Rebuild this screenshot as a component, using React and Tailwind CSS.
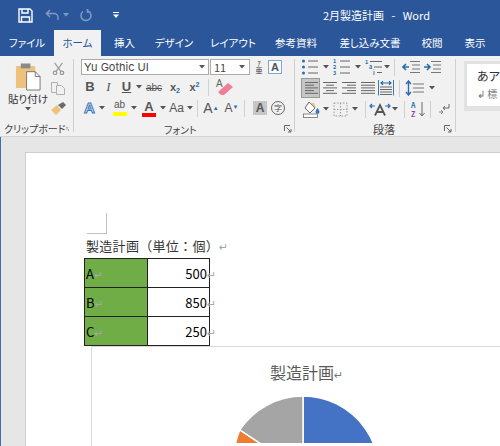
const Chev = ({ className = "w-[10px]" }) => (
  <span className={`${className} flex justify-center shrink-0`}>
    <svg width="6" height="4" viewBox="0 0 6 4"><path d="M0 0h6L3 3.500z" fill="#555" /></svg>
  </span>
);

const Launcher = () => (
  <svg width="8" height="8" viewBox="0 0 8 8" fill="none" stroke="#666">
    <path d="M.5 6V.5H6" />
    <path d="M2.500 2.500L7 7M7 4v3H4" />
  </svg>
);

const Sep = () => <div className="h-[17px] w-px bg-[#d0d0d0] shrink-0" />;
const GroupSep = () => <div className="h-[73px] w-px mt-[3px] bg-[#d0d0d0] shrink-0" />;

// lines of an alignment button, x offsets give the alignment
const Lines = ({ rows }) => (
  <svg width="16" height="14" viewBox="0 0 16 14" stroke="#666">
    {rows.map((r, i) => (
      <path key={i} d={`M${r[0]} ${1.500 + i * 2.700}H${r[1]}`} />
    ))}
  </svg>
);

const ListIcon = ({ marks }) => (
  <svg width="18" height="16" viewBox="0 0 18 16">
    {[2, 8, 14].map((y, i) => (
      <g key={y}>
        {marks === "dot" ? (
          <circle cx="2.500" cy={y} r="1.500" fill="#2b6cb0" />
        ) : (
          <text x="0" y={y + 2} fontSize="5.500" fontWeight="700" fill="#2b6cb0">{i + 1}</text>
        )}
        <path d={`M7 ${y}H17`} stroke="#666" />
      </g>
    ))}
  </svg>
);

const MultiList = () => (
  <svg width="18" height="16" viewBox="0 0 18 16">
    <text x="0" y="5" fontSize="5.500" fontWeight="700" fill="#2b6cb0">1</text>
    <text x="4" y="10" fontSize="5.500" fontWeight="700" fill="#2b6cb0">a</text>
    <text x="8" y="15.500" fontSize="5.500" fontWeight="700" fill="#2b6cb0">i</text>
    <path d="M5 2.500H17M9 8H17M12 13.500H17" stroke="#666" />
  </svg>
);

const IndentIcon = ({ dir }) => (
  <svg width="18" height="14" viewBox="0 0 18 14" fill="none">
    <path d="M8 1.500H18M10 5H18M10 9H18M8 12.500H18" stroke="#777" />
    <path d={dir === "l" ? "M7 7H1M4 4L1 7l3 3" : "M1 7H7M4 4l3 3-3 3"} stroke="#2b6cb0" strokeWidth="1.600" />
  </svg>
);

const PasteIcon = () => (
  <svg width="27" height="28" viewBox="0 0 28 29">
    <rect x="1" y="3" width="20" height="23" rx="1" fill="#eec27c" />
    <rect x="6" y="0.500" width="10" height="5" fill="#8a8a8a" />
    <path d="M12 9h9l5 5v14H12z" fill="#fff" stroke="#777" />
    <path d="M21 9v5h5" fill="none" stroke="#777" />
  </svg>
);

const Scissors = () => (
  <svg width="13" height="13" viewBox="0 0 14 15" fill="none" stroke="#9a9a9a" strokeWidth="1.400">
    <path d="M2.500 1L10 11M11.500 1L4 11" />
    <circle cx="3" cy="12.500" r="2" />
    <circle cx="11" cy="12.500" r="2" />
  </svg>
);

const CopyIcon = () => (
  <svg width="14" height="13" viewBox="0 0 14 13" fill="#f1f1f1" stroke="#b0b0b0">
    <path d="M.5.500h6v10h-6z" />
    <path d="M5.500 3.500h5l3 3v6h-8z" />
  </svg>
);

const Brush = () => (
  <svg width="15" height="13" viewBox="0 0 15 13">
    <path d="M0 8l6-5 4 5-5 5z" fill="#eec27c" />
    <path d="M7 3l5-3 3 3-4 4z" fill="#6b6b6b" />
  </svg>
);

const Eraser = () => (
  <svg width="20" height="18" viewBox="0 0 20 18">
    <path d="M3 14L13 5l5 4-9 8H6z" fill="#ee7f97" />
    <text x="1" y="9" fontSize="10" fill="#666">A</text>
  </svg>
);

const FillIcon = () => (
  <svg width="18" height="17" viewBox="0 0 18 17">
    <path d="M6 1l6 6-5 5-5-5z" fill="#fff" stroke="#666" />
    <path d="M7 2h4l2 5z" fill="#eec27c" />
    <path d="M14.500 7c1.500 2 2 3 2 4a2 2 0 0 1-4 0c0-1 .5-2 2-4z" fill="#3a78bd" />
    <rect x="0.500" y="13" width="14" height="3.500" fill="#fff" stroke="#888" />
  </svg>
);

const BorderIcon = () => (
  <svg width="15" height="15" viewBox="0 0 15 15" fill="none" stroke="#999" strokeDasharray="1.500 1.500">
    <rect x="1" y="1" width="13" height="13" />
    <path d="M7.500 1v13M1 7.500h13" />
  </svg>
);

const DistributeIcon = () => (
  <svg width="16" height="16" viewBox="0 0 16 16" fill="none">
    <path d="M.5 0v15.500M15.500 0v15.500" stroke="#3a78bd" />
    <path d="M3 3h10M5 1.200L3 3l2 1.800M11 1.200L13 3l-2 1.800" stroke="#2b6cb0" strokeWidth="1.200" />
    <path d="M2 7h12M2 9.500h12M2 12h12M2 14.500h12" stroke="#666" />
  </svg>
);

const SpacedA = () => (
  <svg width="22" height="14" viewBox="0 0 22 14" fill="none">
    <path d="M6 13.500L11 3l5 10.500M8 10h6" stroke="#555" strokeWidth="1.800" />
    <path d="M1 4h5M3 2L1 4l2 2M16 4h5M19 2l2 2-2 2" stroke="#2b6cb0" strokeWidth="1.200" />
  </svg>
);

const Pie = () => (
  <svg width="160" height="51" viewBox="-80 -80 160 51" className="block mt-[4px] ml-[131px]">
    <path d="M0 0V-76A76 76 0 0 1 70.200 29.100z" fill="#4472c4" stroke="#fff" strokeWidth="1.500" />
    <path d="M0 0L70.200 29.100A76 76 0 0 1 -63.200 -42.200z" fill="#ed7d31" stroke="#fff" strokeWidth="1.500" />
    <path d="M0 0L-63.200 -42.200A76 76 0 0 1 0 -76z" fill="#a5a5a5" stroke="#fff" strokeWidth="1.500" />
  </svg>
);

const tabs = [
  ["ファイル", "w-[54px]"],
  ["ホーム", "w-[47px]"],
  ["挿入", "w-[47px]"],
  ["デザイン", "w-[52px]"],
  ["レイアウト", "w-[66px]"],
  ["参考資料", "w-[60px]"],
  ["差し込み文書", "w-[88px]"],
  ["校閲", "w-[36px]"],
  ["表示", "w-[50px]"],
];

const Mark = () => <span className="text-[#a6a6a6] text-[11px] font-['DejaVu_Sans',sans-serif]">↵</span>;

const rowsData = [
  ["A", "500"],
  ["B", "850"],
  ["C", "250"],
];

export default function App() {
  return (
    <div className="w-[500px] h-[446px] overflow-hidden flex flex-col bg-[#e6e6e6] font-['Noto_Sans_CJK_JP',sans-serif] [font-feature-settings:'palt']">
      {/* title bar */}
      <div className="h-[30px] bg-[#2b579a] flex items-center text-white shrink-0">
        <svg width="15" height="15" viewBox="0 0 15 15" className="ml-[18px]" fill="none" stroke="#fff" strokeWidth="1.400">
          <path d="M1 1h11l2 2v11H1z" />
          <path d="M4 1v4h6V1M3.500 14V9h8v5" />
        </svg>
        <svg width="16" height="12" viewBox="0 0 16 12" className="ml-[12px]" fill="none" stroke="#7f9ac2" strokeWidth="1.500">
          <path d="M5 1L1.500 4.500 5 8M2 4.500h7a4 4 0 0 1 4 4V11" />
        </svg>
        <svg width="6" height="4" viewBox="0 0 6 4" className="ml-[2px]"><path d="M0 0h6L3 3.500z" fill="#7f9ac2" /></svg>
        <svg width="13" height="13" viewBox="0 0 13 13" className="ml-[10px]" fill="none" stroke="#7f9ac2" strokeWidth="1.500">
          <path d="M4 2.500a5 5 0 1 0 5-.5M8.500 0v3h3" />
        </svg>
        <svg width="6" height="6" viewBox="0 0 6 6" className="ml-[21px]"><path d="M0 0h6v1H0zM0 2.500h6L3 6z" fill="#fff" /></svg>
        <span className="ml-[204px] text-[11px] whitespace-pre">2月製造計画   -   Word</span>
      </div>

      {/* tabs */}
      <div className="h-[26px] bg-[#2b579a] flex shrink-0 text-[10.500px] text-white">
        {tabs.map(([t, w]) => (
          <div
            key={t}
            className={`${w} shrink-0 flex items-center justify-center whitespace-nowrap ${t === "ホーム" ? "bg-[#f1f1f1] text-[#2b579a]" : ""}`}
          >
            {t}
          </div>
        ))}
      </div>

      {/* ribbon */}
      <div className="h-[81px] shrink-0 bg-[#f1f1f1] border-b border-[#d4d4d4] flex text-[#444]">
        {/* clipboard */}
        <div className="w-[73px] shrink-0 flex flex-col">
          <div className="flex h-[65px]">
            <div className="w-[50px] flex flex-col items-center pt-[7px] pl-[6px]">
              <PasteIcon />
              <span className="text-[10.500px] leading-[16px] whitespace-nowrap text-[#333]">貼り付け</span>
              <Chev />
            </div>
            <div className="flex flex-col items-center gap-[7px] pt-[6px] w-[16px]">
              <Scissors />
              <CopyIcon />
              <Brush />
            </div>
          </div>
          <div className="flex items-center justify-between text-[10px] leading-[14px] pl-[4px] pr-[4px] mt-[1px]">
            <span className="whitespace-nowrap">クリップボード</span>
            <Launcher />
          </div>
        </div>
        <GroupSep />

        {/* font */}
        <div className="w-[220px] shrink-0 flex flex-col pl-[7px]">
          <div className="flex items-center mt-[3px] h-[17px]">
            <div className="w-[128px] h-[16px] bg-white border border-[#ababab] flex items-center justify-between pl-[2px] pr-[3px] font-['Inter',sans-serif] text-[11px]">
              <span>Yu Gothic UI</span>
              <Chev className="w-[6px]" />
            </div>
            <div className="w-[40px] h-[16px] ml-px bg-white border border-[#ababab] flex items-center justify-between pl-[3px] pr-[4px] text-[11px]">
              <span>11</span>
              <Chev className="w-[6px]" />
            </div>
            <div className="w-[20px] h-[15px] flex flex-col items-center text-[7px] leading-[7.500px] ml-[-1px]">
              <span>ｱ</span>
              <span>亜</span>
            </div>
            <div className="w-[14px] h-[14px] ml-[-1px] border border-[#7ea6d6] bg-[#f8fbff] flex items-center justify-center text-[11px] font-['Liberation_Sans',sans-serif] font-bold text-[#555]">A</div>
          </div>
          <div className="flex items-center h-[16px] mt-[4px] font-['Liberation_Sans',sans-serif] text-[#555]">
            <span className="w-[18px] text-center text-[13px] font-bold">B</span>
            <span className="w-[19px] text-center text-[13px] italic font-['Liberation_Serif',serif]">I</span>
            <span className="w-[17px] text-center text-[13px] font-bold underline">U</span>
            <Chev className="w-[7px]" />
            <span className="w-[24px] text-center text-[10px] line-through">abc</span>
            <span className="w-[18px] text-center text-[11px] font-bold">x<sub className="text-[7px] text-[#2b6cb0]">2</sub></span>
            <span className="w-[21px] text-center text-[11px] font-bold">x<sup className="text-[7px] text-[#2b6cb0]">2</sup></span>
            <div className="w-[7px] flex justify-center"><Sep /></div>
            <div className="w-[26px] flex justify-center"><Eraser /></div>
          </div>
          <div className="flex items-center h-[18px] mt-[4px] font-['Liberation_Sans',sans-serif] text-[#555]">
            <span className="w-[17px] text-center text-[15px] font-bold text-[#dceafa] [-webkit-text-stroke:1px_#3a78bd]">A</span>
            <Chev className="w-[8px]" />
            <div className="w-[21px] ml-[3px] flex flex-col items-center leading-[10px]">
              <span className="text-[10px] h-[12px]">ab</span>
              <div className="w-[14px] h-[4px] bg-[#ffff00]" />
            </div>
            <Chev className="w-[8px]" />
            <div className="w-[20px] flex flex-col items-center ml-[1px]">
              <span className="text-[13px] leading-[13px] font-bold">A</span>
              <div className="w-[14px] h-[4px] bg-[#ff0000]" />
            </div>
            <Chev className="w-[8px]" />
            <span className="w-[19px] text-center text-[12px]">Aa</span>
            <Chev className="w-[7px]" />
            <div className="w-[8px] flex justify-center"><Sep /></div>
            <span className="w-[20px] text-center text-[14px]">A<sup className="text-[6px] text-[#2b6cb0]">▲</sup></span>
            <span className="w-[21px] text-center text-[12px]">A<sup className="text-[6px] text-[#2b6cb0]">▼</sup></span>
            <div className="w-[5px] flex justify-center"><Sep /></div>
            <span className="w-[14px] h-[14px] ml-[6px] bg-[#c6c6c6] flex items-center justify-center text-[12px] font-bold">A</span>
            <span className="w-[14px] h-[14px] ml-[4px] rounded-full border border-[#666] flex items-center justify-center text-[8px] font-['Noto_Sans_CJK_JP',sans-serif]">字</span>
          </div>
          <div className="flex items-center mt-[5px] h-[14px] text-[10px]">
            <span className="ml-[83px] w-[120px] whitespace-nowrap">フォント</span>
            <Launcher />
          </div>
        </div>
        <GroupSep />

        {/* paragraph */}
        <div className="w-[160px] shrink-0 flex flex-col pl-[6px]">
          <div className="flex items-center h-[16px] mt-[3px]">
            <ListIcon marks="dot" />
            <Chev className="w-[14px]" />
            <ListIcon marks="num" />
            <Chev className="w-[14px]" />
            <MultiList />
            <Chev className="w-[8px]" />
            <div className="w-[7px] flex justify-center"><Sep /></div>
            <div className="ml-[4px]"><IndentIcon dir="l" /></div>
            <div className="ml-[3px]"><IndentIcon dir="r" /></div>
          </div>
          <div className="flex items-center h-[20px] mt-[3px]">
            <div className="w-[19px] h-[20px] bg-[#c6c6c6] border border-[#999] flex items-center justify-center">
              <Lines rows={[[2, 15], [2, 11], [2, 15], [2, 11], [2, 15]]} />
            </div>
            <div className="w-[19px] flex justify-center"><Lines rows={[[1, 15], [4, 12], [1, 15], [4, 12], [1, 15]]} /></div>
            <div className="w-[19px] flex justify-center"><Lines rows={[[1, 15], [6, 15], [1, 15], [6, 15], [1, 15]]} /></div>
            <div className="w-[19px] flex justify-center"><Lines rows={[[1, 15], [1, 15], [1, 15], [1, 15], [1, 15]]} /></div>
            <div className="w-[18px] flex justify-center"><DistributeIcon /></div>
            <div className="w-[8px] flex justify-center"><Sep /></div>
            <div className="w-[24px] flex justify-center">
              <svg width="20" height="16" viewBox="0 0 20 16" fill="none">
                <path d="M8 4H19M8 8H19M8 12H19" stroke="#777" />
                <path d="M3.500 1v14M1 4l2.500-3L6 4M1 12l2.500 3L6 12" stroke="#2b6cb0" strokeWidth="1.400" />
              </svg>
            </div>
            <Chev className="w-[10px]" />
          </div>
          <div className="flex items-center h-[18px] mt-[2px]">
            <div className="w-[21px] flex justify-center ml-[1px]"><FillIcon /></div>
            <Chev className="w-[8px]" />
            <div className="w-[22px] flex justify-center"><BorderIcon /></div>
            <Chev className="w-[8px]" />
            <div className="w-[8px] flex justify-center ml-[2px]"><Sep /></div>
            <div className="w-[22px] flex justify-center"><SpacedA /></div>
            <Chev className="w-[8px]" />
            <div className="w-[8px] flex justify-center ml-[2px]"><Sep /></div>
            <div className="w-[20px] flex justify-center">
              <svg width="15" height="17" viewBox="0 0 15 17" fill="none">
                <text x="0" y="7" fontSize="7" fontWeight="700" fill="#2b6cb0">A</text>
                <text x="0" y="16" fontSize="7" fontWeight="700" fill="#8e44ad">Z</text>
                <path d="M11 1v14M8.500 12l2.500 3 2.500-3" stroke="#666" />
              </svg>
            </div>
            <div className="w-[6px] flex justify-center"><Sep /></div>
            <div className="w-[22px] flex justify-center">
              <svg width="12" height="12" viewBox="0 0 12 12" fill="none" stroke="#666">
                <path d="M11 1v4H5M7 3L5 5l2 2" />
                <path d="M1 9h3M3 7l2 2-2 2" stroke="#888" />
              </svg>
            </div>
          </div>
          <div className="flex items-center mt-[4px] h-[14px] text-[11px]">
            <span className="ml-[72px] w-[71px]">段落</span>
            <Launcher />
          </div>
        </div>
        <GroupSep />

        {/* styles gallery */}
        <div className="flex-1 min-w-0 pl-[8px] pt-[5px]">
          <div className="h-[50px] bg-[#e2e2e2] pt-[3px] pl-[3px]">
            <div className="h-[42px] bg-white pl-[10px] pt-[2px] overflow-hidden whitespace-nowrap">
              <div className="text-[12px] leading-[20px] text-[#333]">あア</div>
              <div className="text-[10px] leading-[16px] text-[#777]">↲ 標</div>
            </div>
          </div>
        </div>
      </div>

      {/* document area */}
      <div className="flex-1 min-h-0 pl-[24px] pt-[15px] border-l border-[#3f6db5]">
        <div className="h-full bg-white border-l border-t border-[#cfcfcf] overflow-hidden">
          <div className="ml-[61px] mt-[60px] w-[20px] h-[21px] border-r border-b border-[#c0c0c0]" />
          <div className="ml-[60px] mt-[3px] mb-[4px] h-[17px] text-[13px] leading-[17px] text-[#333] whitespace-nowrap tracking-[0.300px] [font-feature-settings:normal]">
            製造計画（単位：個）<Mark />
          </div>
          <table className="ml-[58px] w-[126px] border-collapse table-fixed text-[13px] text-black">
            <tbody>
              {rowsData.map(([k, v]) => (
                <tr key={k} className="h-[29px]">
                  <td className="w-[63px] border border-[#222] bg-[#70ad47] p-0 pt-[3px] pl-px leading-[16px]">
                    {k}<Mark />
                  </td>
                  <td className="border border-[#222] p-0 pt-[3px] pr-[2px] text-right leading-[16px] whitespace-nowrap">
                    {v}<span className="inline-block w-0"><Mark /></span>
                  </td>
                </tr>
              ))}
            </tbody>
          </table>
          {/* chart */}
          <div className="ml-[65px] border-l border-t border-[#d9d9d9] h-[120px]">
            <div className="mt-[13px] ml-[178px] text-[16px] leading-[24px] text-[#595959] whitespace-nowrap [font-feature-settings:normal]">
              製造計画<span className="text-[11px] text-[#777] font-['DejaVu_Sans',sans-serif]">↵</span>
            </div>
            <Pie />
          </div>
        </div>
      </div>
    </div>
  );
}
